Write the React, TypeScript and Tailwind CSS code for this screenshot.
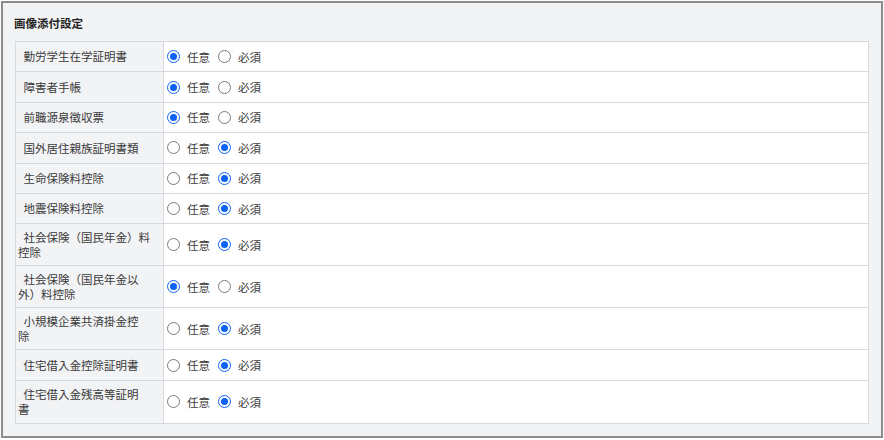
import React from "react";

type Row = { lines: string[]; required: boolean };

const rows: Row[] = [
  { lines: ["勤労学生在学証明書"], required: false },
  { lines: ["障害者手帳"], required: false },
  { lines: ["前職源泉徴収票"], required: false },
  { lines: ["国外居住親族証明書類"], required: true },
  { lines: ["生命保険料控除"], required: true },
  { lines: ["地震保険料控除"], required: true },
  { lines: ["社会保険（国民年金）料", "控除"], required: true },
  { lines: ["社会保険（国民年金以", "外）料控除"], required: false },
  { lines: ["小規模企業共済掛金控", "除"], required: true },
  { lines: ["住宅借入金控除証明書"], required: true },
  { lines: ["住宅借入金残高等証明", "書"], required: true },
];

function Radio({ checked }: { checked: boolean }) {
  if (checked) {
    return (
      <span className="flex h-[13px] w-[13px] shrink-0 items-center justify-center rounded-full border-[1.5px] border-[#0b63f6] bg-white">
        <span className="h-[7px] w-[7px] rounded-full bg-[#0b63f6]" />
      </span>
    );
  }
  return <span className="block h-[13px] w-[13px] shrink-0 rounded-full border border-[#7a7a7a] bg-white" />;
}

export default function App() {
  return (
    <div
      className="h-[440px] w-[884px] bg-white pl-px pt-px"
      style={{ fontFamily: '"Noto Sans CJK JP", "Noto Sans", sans-serif' }}
    >
      <div className="h-[437px] w-[882px] border-2 border-[#8c8c8c] bg-[#f2f3f5] px-[12px] pt-[12px]">
        <div className="text-[11.5px] font-bold leading-[16px] text-[#222]">
          <span className="-ml-px">画像添付設定</span>
        </div>
        <div className="mt-[10px] border border-[#d6d9de] text-[11.5px] text-[#3a3a3a]">
          {rows.map((r, i) => (
            <div
              key={i}
              className={`flex ${i < rows.length - 1 ? "border-b border-[#d6d9de]" : ""} ${
                r.lines.length > 1 ? "h-[42px]" : "h-[30.4px]"
              }`}
            >
              <div className="flex w-[148px] shrink-0 flex-col justify-center border-r border-[#d6d9de] bg-[#f2f3f5] pl-[2px] leading-[14.5px]">
                {r.lines.map((l, j) => (
                  <div key={j} className={`whitespace-nowrap ${j === 0 ? "pl-[5.5px]" : ""}`}>
                    {l}
                  </div>
                ))}
              </div>
              <div className="flex flex-1 items-center bg-white pl-[3px]">
                <Radio checked={!r.required} />
                <span className="ml-[7px] leading-[14px]">任意</span>
                <span className="ml-[8px]">
                  <Radio checked={r.required} />
                </span>
                <span className="ml-[7px] leading-[14px]">必須</span>
              </div>
            </div>
          ))}
        </div>
      </div>
    </div>
  );
}
